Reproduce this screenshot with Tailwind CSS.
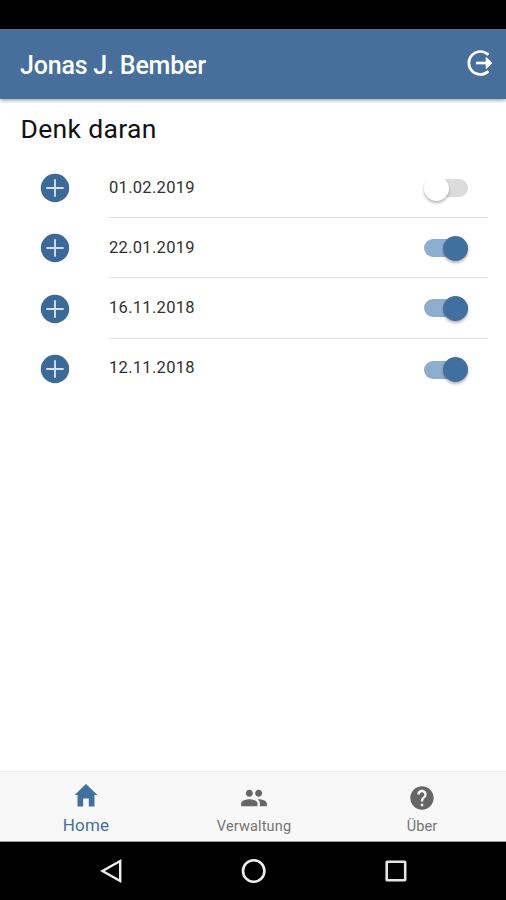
<!DOCTYPE html>
<html lang="de">
<head>
<meta charset="utf-8">
<title>Denk daran</title>
<script src="https://cdn.jsdelivr.net/npm/@tailwindcss/browser@4"></script>
</head>
<body class="w-[506px] h-[900px] overflow-hidden bg-white font-[Roboto,sans-serif]">
<svg class="hidden">
  <symbol id="plus" viewBox="0 0 30 30"><circle cx="15" cy="15" r="14.2" fill="#3b6a99"/><path d="M15 6.3v17.4M6.3 15h17.4" stroke="#d3e1ee" stroke-width="1.9"/></symbol>
</svg>
<div class="flex h-full flex-col">
  <div class="h-[29px] bg-black"></div>
  <header class="z-10 flex h-[70px] items-center justify-between bg-[#466f9b] pl-[20px] pr-[12px] shadow-[0_1px_4px_rgba(0,0,0,0.45)]">
    <h1 class="pt-[3px] text-[25px] leading-[30px] font-medium text-white tracking-[-0.2px]">Jonas J. Bember</h1>
    <svg class="mb-[2px]" width="28" height="28" viewBox="0 0 28 28" fill="none" stroke="#fff" stroke-width="2.7"><path d="M22.4 5.8A11.5 11.5 0 1 0 22.400 22.2"/><path d="M10 14H24"/><path d="M20.2 8.500L26 14L20.200 19.500z" fill="#fff" stroke-width="1" stroke-linejoin="round"/></svg>
  </header>
  <main class="flex-1">
    <h2 class="h-[58.5px] pl-[20.5px] pt-[14px] text-[26.5px] leading-[32px] text-[#111] tracking-[0.33px]">Denk daran</h2>
    <ul class="text-[16.5px] text-[#303030] tracking-[0.3px]">
      <li class="flex h-[60.4px] pl-[40px] pr-[18px]">
        <svg class="mt-[15.5px] mr-[39px]" width="30" height="30"><use href="#plus"/></svg>
        <div class="flex flex-1 items-start justify-between border-b border-[#dedede] pr-[20px]">
          <span class="mt-[20px] leading-[20px]">01.02.2019</span>
          <span class="mt-[21.5px] flex h-[18px] w-[44px] items-center rounded-full bg-linear-to-r from-transparent from-25% to-[#dcdcdc] to-25%"><span class="h-[25px] w-[25px] rounded-full bg-white shadow-[0_2px_3px_rgba(0,0,0,0.3)]"></span></span>
        </div>
      </li>
      <li class="flex h-[60.4px] pl-[40px] pr-[18px]">
        <svg class="mt-[15.5px] mr-[39px]" width="30" height="30"><use href="#plus"/></svg>
        <div class="flex flex-1 items-start justify-between border-b border-[#e4e4e4] pr-[20px]">
          <span class="mt-[20px] leading-[20px]">22.01.2019</span>
          <span class="mt-[21.5px] flex h-[18px] w-[44px] items-center justify-end rounded-full bg-[#8eaecf]"><span class="h-[25px] w-[25px] rounded-full bg-[#41709f] shadow-[0_2px_3px_rgba(0,0,0,0.3)]"></span></span>
        </div>
      </li>
      <li class="flex h-[60.4px] pl-[40px] pr-[18px]">
        <svg class="mt-[15.5px] mr-[39px]" width="30" height="30"><use href="#plus"/></svg>
        <div class="flex flex-1 items-start justify-between border-b border-[#e4e4e4] pr-[20px]">
          <span class="mt-[19.5px] leading-[20px]">16.11.2018</span>
          <span class="mt-[21px] flex h-[18px] w-[44px] items-center justify-end rounded-full bg-[#8eaecf]"><span class="h-[25px] w-[25px] rounded-full bg-[#41709f] shadow-[0_2px_3px_rgba(0,0,0,0.3)]"></span></span>
        </div>
      </li>
      <li class="flex h-[60.4px] pl-[40px] pr-[18px]">
        <svg class="mt-[15.5px] mr-[39px]" width="30" height="30"><use href="#plus"/></svg>
        <div class="flex flex-1 items-start justify-between pr-[20px]">
          <span class="mt-[19.5px] leading-[20px]">12.11.2018</span>
          <span class="mt-[22px] flex h-[18px] w-[44px] items-center justify-end rounded-full bg-[#8eaecf]"><span class="h-[25px] w-[25px] rounded-full bg-[#41709f] shadow-[0_2px_3px_rgba(0,0,0,0.3)]"></span></span>
        </div>
      </li>
    </ul>
  </main>
  <nav class="grid h-[71px] grid-cols-3 border-t border-b border-t-[#ececec] border-b-[#999] bg-[#f8f8f8] pl-[2px] text-[#747474]">
    <a class="flex flex-col items-center text-[#41709f]">
      <svg class="mt-[11px]" width="24" height="26" viewBox="0 0 24 26" fill="currentColor"><path d="M12 1L23.4 12H20.5V23.5H14.8V15.5H9.2V23.5H3.5V12H.6z"/></svg>
      <span class="mt-[5px] text-[17px] leading-[22px] tracking-[0.2px]">Home</span>
    </a>
    <a class="flex flex-col items-center">
      <svg class="mt-[12px]" width="28" height="28" viewBox="0 0 24 24" fill="#666"><path d="M16 11c1.66 0 2.99-1.34 2.99-3S17.66 5 16 5s-3 1.34-3 3 1.34 3 3 3zm-8 0c1.66 0 2.99-1.34 2.99-3S9.66 5 8 5 5 6.34 5 8s1.34 3 3 3zm0 2c-2.33 0-7 1.17-7 3.5V19h14v-2.5c0-2.33-4.67-3.5-7-3.5zm8 0c-.29 0-.62.02-.97.05 1.16.84 1.97 1.97 1.97 3.45V19h6v-2.5c0-2.33-4.67-3.5-7-3.5z"/></svg>
      <span class="mt-[4.500px] text-[14.5px] leading-[20px] tracking-[0.15px]">Verwaltung</span>
    </a>
    <a class="flex flex-col items-center">
      <svg class="mt-[12px]" width="28" height="28" viewBox="0 0 24 24" fill="#666"><path d="M12 2C6.48 2 2 6.48 2 12s4.48 10 10 10 10-4.48 10-10S17.52 2 12 2zm1 17h-2v-2h2v2zm2.07-7.75l-.9.92C13.45 12.9 13 13.5 13 15h-2v-.5c0-1.1.45-2.1 1.17-2.83l1.24-1.26c.37-.36.59-.86.59-1.41 0-1.1-.9-2-2-2s-2 .9-2 2H8c0-2.21 1.79-4 4-4s4 1.79 4 4c0 .88-.36 1.68-.93 2.25z"/></svg>
      <span class="mt-[4.500px] text-[14.5px] leading-[20px] tracking-[0.15px]">Über</span>
    </a>
  </nav>
  <footer class="flex h-[58px] items-center justify-between bg-black pl-[99px] pr-[98px]">
    <svg width="24" height="26" viewBox="0 0 24 26" fill="none" stroke="#eee" stroke-width="2.4"><path d="M21.2 3V23L3.5 13z"/></svg>
    <svg width="26" height="26" viewBox="0 0 26 26" fill="none" stroke="#eee" stroke-width="2.6"><circle cx="12.7" cy="13" r="10.7"/></svg>
    <svg width="24" height="26" viewBox="0 0 24 26" fill="none" stroke="#e4e4e4" stroke-width="2.6"><rect x="2.7" y="3.7" width="18.5" height="18.5" rx=".5"/></svg>
  </footer>
</div>
</body>
</html>
